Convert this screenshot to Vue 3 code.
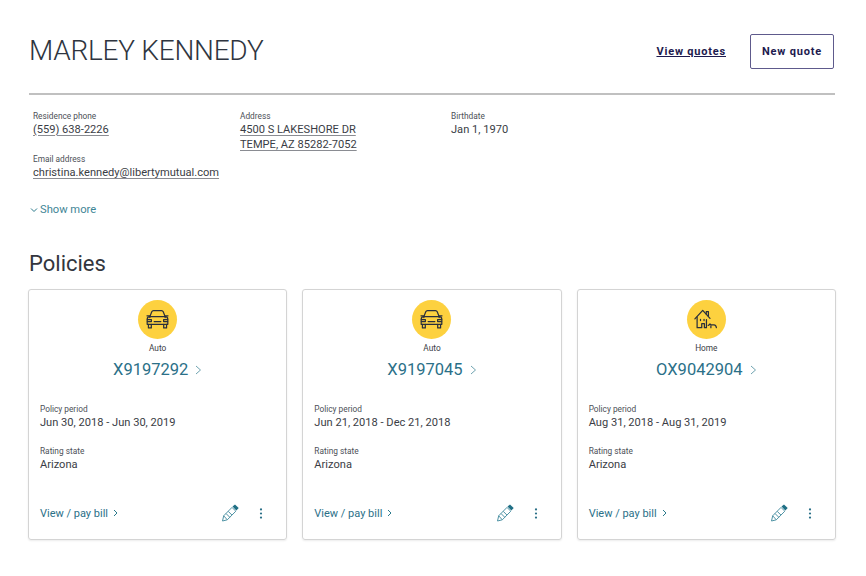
<template>
  <div class="page">
    <!-- Customer name and actions -->
    <header class="head">
      <h1 class="name">MARLEY KENNEDY</h1>
      <div class="actions">
        <a class="quotes">View quotes</a>
        <button class="new-quote">New quote</button>
      </div>
    </header>

    <section class="details">
      <div class="col col-a">
        <div class="field">
          <div class="label">Residence phone</div>
          <a class="val link">(559) 638-2226</a>
        </div>
        <div class="field email">
          <div class="label">Email address</div>
          <a class="val link">christina.kennedy@libertymutual.com</a>
        </div>
      </div>
      <div class="col col-b">
        <div class="label">Address</div>
        <a class="val link">4500 S LAKESHORE DR</a>
        <a class="val link">TEMPE, AZ 85282-7052</a>
      </div>
      <div class="col">
        <div class="label">Birthdate</div>
        <div class="val">Jan 1, 1970</div>
      </div>
    </section>

    <a class="more">
      <svg width="8" height="6" viewBox="0 0 8 6"><path d="M1 1.500l3 3 3-3" fill="none" stroke="#2b7a8c" stroke-width="1"/></svg>
      Show more
    </a>

    <h2 class="policies-title">Policies</h2>

    <div class="cards">
      <article v-for="p in policies" :key="p.number" class="card">
        <div class="badge">
          <!-- car -->
          <svg v-if="p.type === 'Auto'" width="25" height="21" viewBox="0 0 26 22" fill="none" stroke="#2a2f3c" stroke-width="1.300" stroke-linejoin="round" stroke-linecap="round">
            <path d="M5 8l2-5.200C7.300 2 8 1.600 8.800 1.600h8.400c.8 0 1.500.4 1.800 1.200L21 8" />
            <path d="M5 8h16c1.600 0 2.800 1.200 2.800 2.800V16H2.200v-5.200C2.200 9.200 3.400 8 5 8z" />
            <path d="M2 7.200h3v1.800M24 7.200h-3v1.800" />
            <path d="M3.500 16v3.800h3V16M19.500 16v3.800h3V16" />
            <path d="M2.400 11.200h4.200v2H2.400M23.600 11.200h-4.200v2h4.200M9.500 13.200h7" />
          </svg>
          <!-- house with dog -->
          <svg v-else width="24" height="20.500" viewBox="0 0 27 23" fill="none" stroke="#2a2f3c" stroke-width="1.400" stroke-linejoin="round" stroke-linecap="round">
            <path d="M1 11L9.800 1.500 18 10.500" />
            <path d="M13.800 5.500V2.800h2.400v5" />
            <path d="M3.500 9v12h5.200v-4.500h3V21h2.300v-9" />
            <path d="M7.300 11.500v1.500M11.300 11.500v1.500" />
            <path d="M16 18.500c1 0 1.400-1.200 2-1.800l1.200 1.200h3.300c1.500 0 2.300 1 2.700 2.900M19 19v2" />
          </svg>
        </div>
        <div class="type">{{ p.type }}</div>
        <a class="number">
          {{ p.number }}
          <svg class="num-arrow" width="7" height="10" viewBox="0 0 7 10"><path d="M1 1l4.500 4-4.500 4" fill="none" stroke="#6fa3b0" stroke-width="1"/></svg>
        </a>
        <div class="info">
          <div class="label">Policy period</div>
          <div class="val">{{ p.period }}</div>
        </div>
        <div class="info state">
          <div class="label">Rating state</div>
          <div class="val">{{ p.state }}</div>
        </div>
        <footer class="card-foot">
          <a class="bill">
            View / pay bill
            <svg width="5" height="8" viewBox="0 0 5 8"><path d="M1 1l3 3-3 3" fill="none" stroke="#2b7a8c" stroke-width="1"/></svg>
          </a>
          <div class="tools">
            <svg width="18" height="18" viewBox="0 0 18 18">
              <path d="M1.500 17l1.200-5.200L11 3.400l3.800 3.800-8.500 8.600z M2.700 11.800l3.600 4M5 9.500l3.700 3.700M7.200 7.300l3.700 3.700" fill="none" stroke="#4f93a5" stroke-width="1"/>
              <path d="M11.500 2.600L14 .4l3.700 3.700-2.300 2.500z" fill="#1f6f85"/>
            </svg>
            <svg class="dots" width="4" height="11" viewBox="0 0 4 12" fill="#2b7088">
              <circle cx="2" cy="1.600" r="1.200"/><circle cx="2" cy="6" r="1.200"/><circle cx="2" cy="10.400" r="1.200"/>
            </svg>
          </div>
        </footer>
      </article>
    </div>
  </div>
</template>

<script setup>
const policies = [
  { type: 'Auto', number: 'X9197292', period: 'Jun 30, 2018 - Jun 30, 2019', state: 'Arizona' },
  { type: 'Auto', number: 'X9197045', period: 'Jun 21, 2018 - Dec 21, 2018', state: 'Arizona' },
  { type: 'Home', number: 'OX9042904', period: 'Aug 31, 2018 - Aug 31, 2019', state: 'Arizona' }
];
</script>

<style>
html, body { background: #fff; }
</style>

<style scoped>
.page {
  box-sizing: border-box;
  width: 866px;
  height: 576px;
  padding: 0 31px 0 29px;
  font-family: Roboto, "Liberation Sans", sans-serif;
  color: #3a3d45;
  overflow: hidden;
}

.head {
  display: flex;
  justify-content: space-between;
  align-items: center;
  box-sizing: border-box;
  height: 95px;
  padding-top: 9px;
  border-bottom: 2px solid #c0c0c0;
}
.name {
  margin: 0 0 2px;
  font-size: 28px;
  font-weight: 300;
  color: #2f3540;
  letter-spacing: -0.25px;
}
.actions { display: flex; align-items: center; gap: 24px; margin-right: 1px; }
.quotes {
  font-size: 11px;
  font-weight: 700;
  letter-spacing: 0.8px;
  color: #1d1a4e;
  text-decoration: underline;
}
.new-quote {
  width: 84px;
  height: 35px;
  padding: 0;
  background: #fff;
  border: 1px solid #5e5a8c;
  border-radius: 2px;
  font-family: inherit;
  font-size: 11px;
  font-weight: 700;
  letter-spacing: 0.8px;
  color: #1d1a4e;
}

.details { display: flex; padding: 15px 0 0 4px; }
.col { display: flex; flex-direction: column; align-items: flex-start; }
.col-a { width: 207px; }
.col-b { width: 211px; }
.email { margin-top: 16px; }

.label { font-size: 8.300px; line-height: 12px; color: #4c4f57; }
.val { display: block; font-size: 11.100px; line-height: 15px; color: #3a3d45; }
.link { text-decoration: underline; text-underline-offset: 2px; text-decoration-color: #8a8c92; }

.more {
  display: flex;
  align-items: center;
  gap: 2px;
  margin: 22px 0 0 1px;
  font-size: 11.200px;
  line-height: 15px;
  color: #3f8696;
}

.policies-title {
  margin: 34px 0 0;
  font-size: 22px;
  line-height: 26px;
  font-weight: 400;
  color: #33363e;
}

.cards { display: flex; gap: 15px; margin: 12px -1px 0; }
.card {
  box-sizing: border-box;
  width: 259.330px;
  height: 251px;
  padding: 10px 11px 0;
  display: flex;
  flex-direction: column;
  border: 1px solid #d4d4d4;
  border-radius: 3px;
  box-shadow: 0 1px 2px rgba(0,0,0,0.08);
}
.badge {
  align-self: center;
  width: 39px;
  height: 39px;
  border-radius: 50%;
  background: #fdd13f;
  display: flex;
  align-items: center;
  justify-content: center;
}
.type { margin-top: 3px; text-align: center; font-size: 8.300px; line-height: 12px; color: #3a3d45; }
.number {
  display: flex;
  justify-content: center;
  align-items: center;
  gap: 7px;
  margin-top: 5px;
  font-size: 16.500px;
  line-height: 22px;
  color: #2b7088;
}
.info { margin-top: 22px; }
.info.state { margin-top: 15px; }
.card-foot {
  display: flex;
  justify-content: space-between;
  align-items: center;
  margin-top: 32px;
}
.bill {
  display: flex;
  align-items: center;
  gap: 5px;
  font-size: 11px;
  color: #2b7088;
}
.tools { display: flex; align-items: center; gap: 20px; padding-right: 12px; }
.dots { display: block; }
</style>
